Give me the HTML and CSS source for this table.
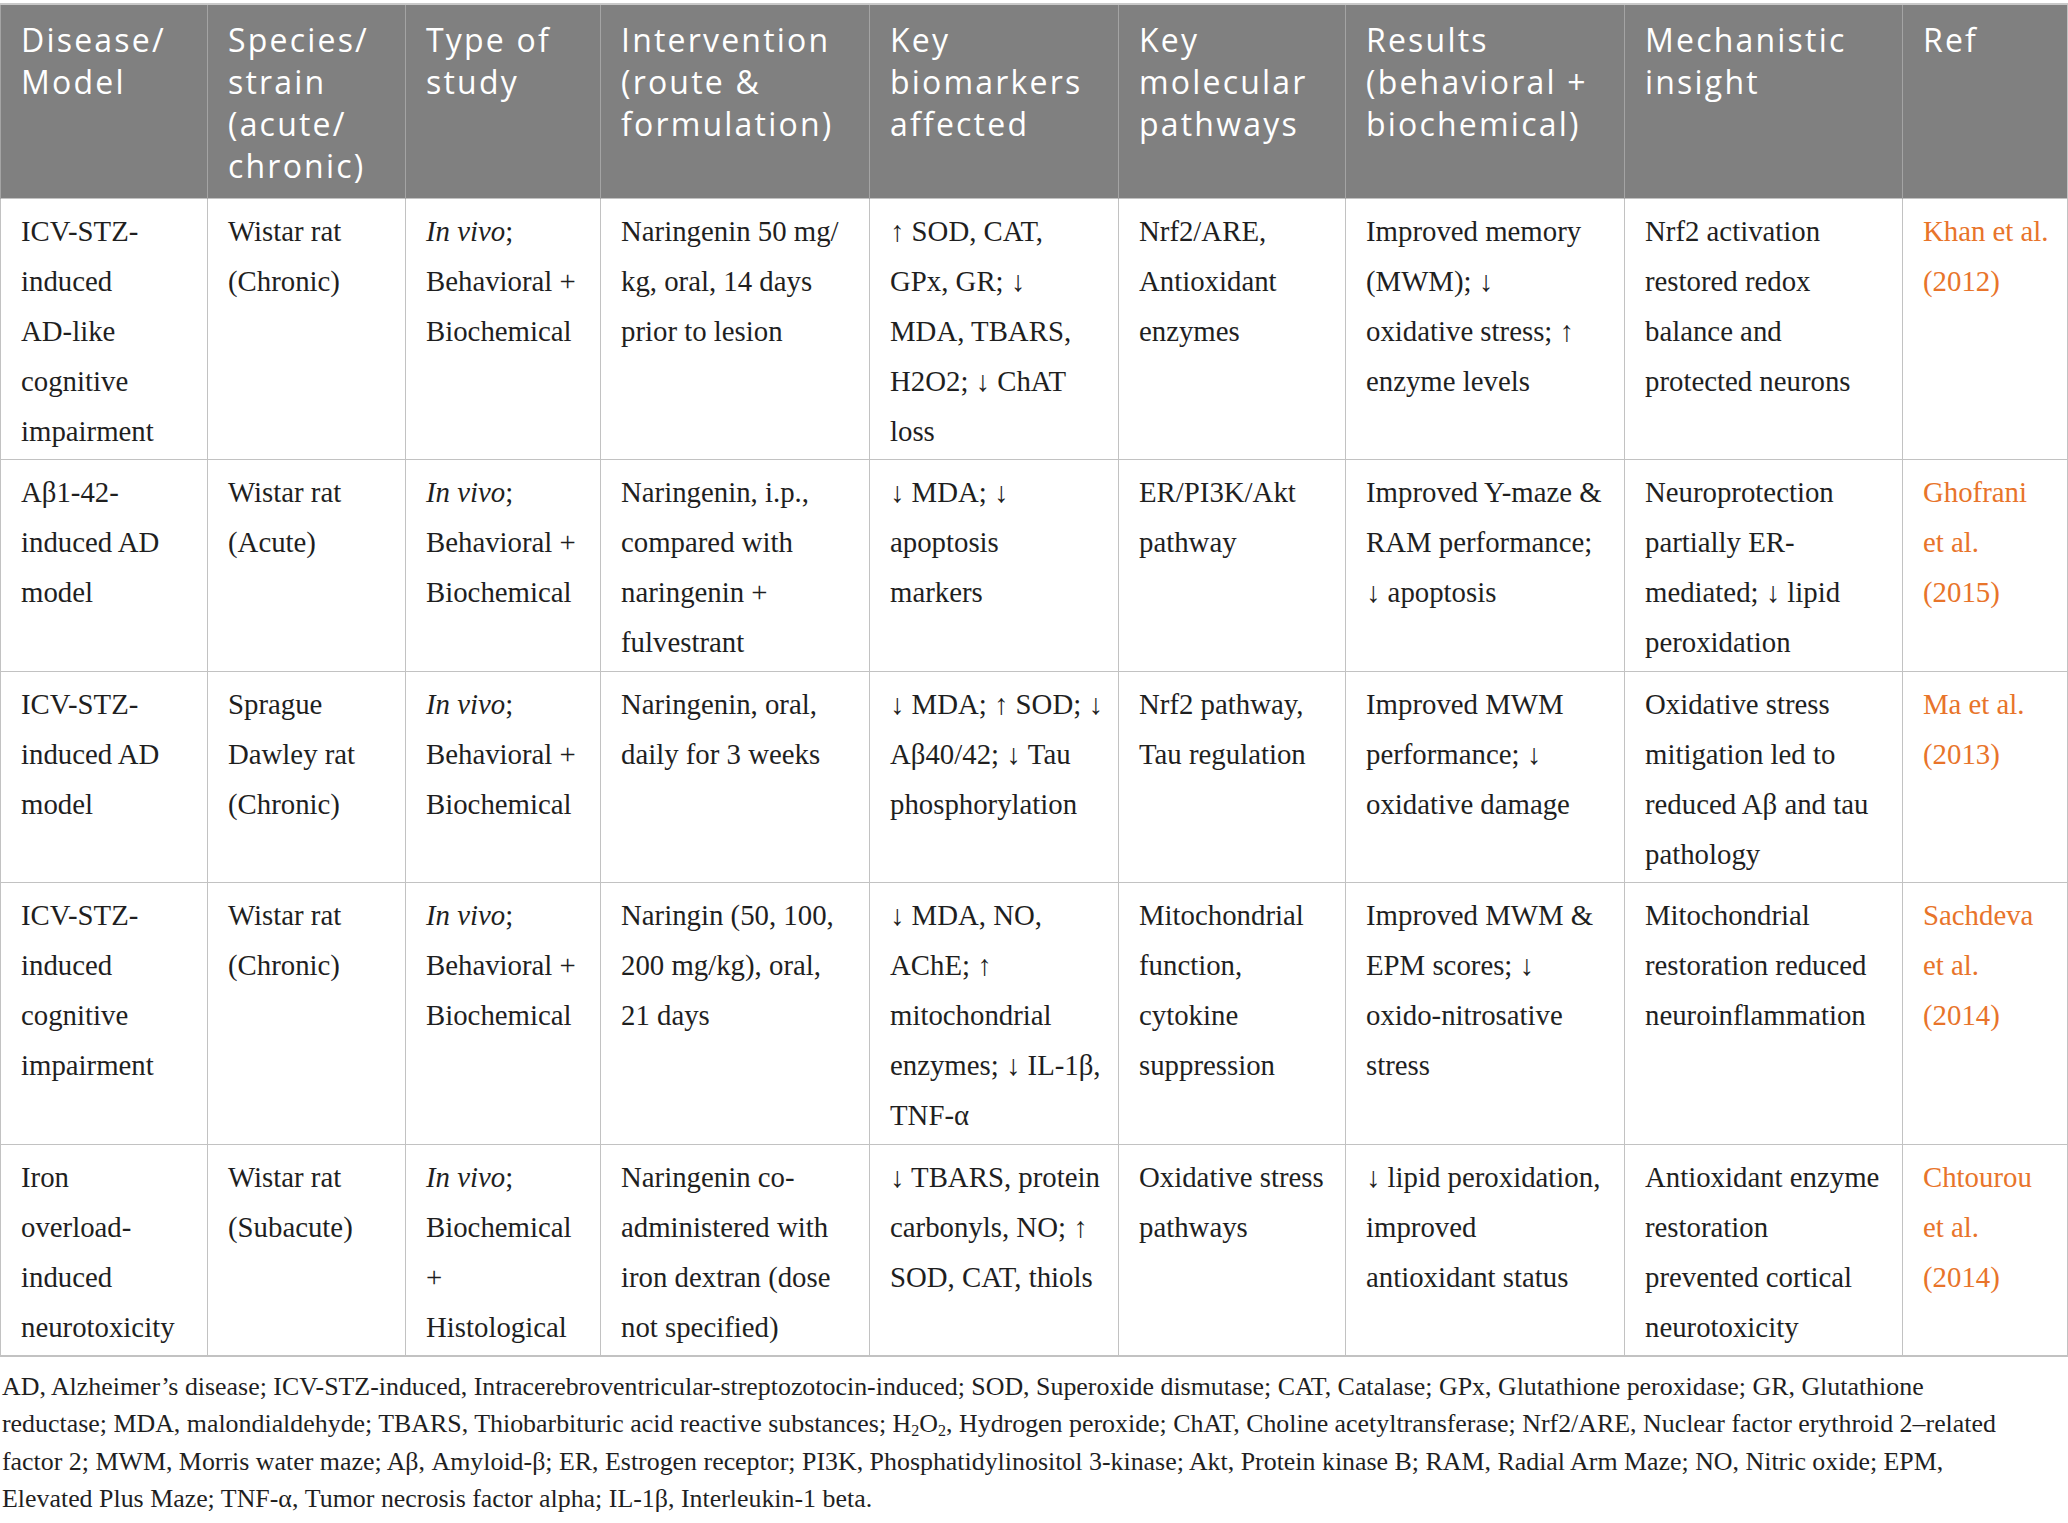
FILE: index.html
```html
<!DOCTYPE html>
<html lang="en">
<head>
<meta charset="utf-8">
<title>Naringenin studies</title>
<link rel="stylesheet" href="styles.css">
</head>
<body>
<div class="wrap">
<table class="tbl">
<colgroup>
<col class="w1"><col class="w2"><col class="w3"><col class="w4"><col class="w5"><col class="w6"><col class="w7"><col class="w8"><col class="w9">
</colgroup>
<thead>
<tr>
<th>Disease/<br>Model</th>
<th>Species/<br>strain<br>(acute/<br>chronic)</th>
<th>Type of<br>study</th>
<th>Intervention<br>(route &amp;<br>formulation)</th>
<th>Key<br>biomarkers<br>affected</th>
<th>Key<br>molecular<br>pathways</th>
<th>Results<br>(behavioral +<br>biochemical)</th>
<th>Mechanistic<br>insight</th>
<th>Ref</th>
</tr>
</thead>
<tbody>
<tr>
<td>ICV-STZ-<br>induced<br>AD-like<br>cognitive<br>impairment</td>
<td>Wistar rat<br>(Chronic)</td>
<td><i>In vivo</i>;<br>Behavioral +<br>Biochemical</td>
<td>Naringenin 50 mg/<br>kg, oral, 14 days<br>prior to lesion</td>
<td>↑ SOD, CAT,<br>GPx, GR; ↓<br>MDA, TBARS,<br>H2O2; ↓ ChAT<br>loss</td>
<td>Nrf2/ARE,<br>Antioxidant<br>enzymes</td>
<td>Improved memory<br>(MWM); ↓<br>oxidative stress; ↑<br>enzyme levels</td>
<td>Nrf2 activation<br>restored redox<br>balance and<br>protected neurons</td>
<td class="ref">Khan et al.<br>(2012)</td>
</tr>
<tr>
<td>Aβ1-42-<br>induced AD<br>model</td>
<td>Wistar rat<br>(Acute)</td>
<td><i>In vivo</i>;<br>Behavioral +<br>Biochemical</td>
<td>Naringenin, i.p.,<br>compared with<br>naringenin +<br>fulvestrant</td>
<td>↓ MDA; ↓<br>apoptosis<br>markers</td>
<td>ER/PI3K/Akt<br>pathway</td>
<td>Improved Y-maze &amp;<br>RAM performance;<br>↓ apoptosis</td>
<td>Neuroprotection<br>partially ER-<br>mediated; ↓ lipid<br>peroxidation</td>
<td class="ref">Ghofrani<br>et al.<br>(2015)</td>
</tr>
<tr>
<td>ICV-STZ-<br>induced AD<br>model</td>
<td>Sprague<br>Dawley rat<br>(Chronic)</td>
<td><i>In vivo</i>;<br>Behavioral +<br>Biochemical</td>
<td>Naringenin, oral,<br>daily for 3 weeks</td>
<td>↓ MDA; ↑ SOD; ↓<br>Aβ40/42; ↓ Tau<br>phosphorylation</td>
<td>Nrf2 pathway,<br>Tau regulation</td>
<td>Improved MWM<br>performance; ↓<br>oxidative damage</td>
<td>Oxidative stress<br>mitigation led to<br>reduced Aβ and tau<br>pathology</td>
<td class="ref">Ma et al.<br>(2013)</td>
</tr>
<tr>
<td>ICV-STZ-<br>induced<br>cognitive<br>impairment</td>
<td>Wistar rat<br>(Chronic)</td>
<td><i>In vivo</i>;<br>Behavioral +<br>Biochemical</td>
<td>Naringin (50, 100,<br>200 mg/kg), oral,<br>21 days</td>
<td>↓ MDA, NO,<br>AChE; ↑<br>mitochondrial<br>enzymes; ↓ IL-1β,<br>TNF-α</td>
<td>Mitochondrial<br>function,<br>cytokine<br>suppression</td>
<td>Improved MWM &amp;<br>EPM scores; ↓<br>oxido-nitrosative<br>stress</td>
<td>Mitochondrial<br>restoration reduced<br>neuroinflammation</td>
<td class="ref">Sachdeva<br>et al.<br>(2014)</td>
</tr>
<tr>
<td>Iron<br>overload-<br>induced<br>neurotoxicity</td>
<td>Wistar rat<br>(Subacute)</td>
<td><i>In vivo</i>;<br>Biochemical<br>+<br>Histological</td>
<td>Naringenin co-<br>administered with<br>iron dextran (dose<br>not specified)</td>
<td>↓ TBARS, protein<br>carbonyls, NO; ↑<br>SOD, CAT, thiols</td>
<td>Oxidative stress<br>pathways</td>
<td>↓ lipid peroxidation,<br>improved<br>antioxidant status</td>
<td>Antioxidant enzyme<br>restoration<br>prevented cortical<br>neurotoxicity</td>
<td class="ref">Chtourou<br>et al.<br>(2014)</td>
</tr>
</tbody>
</table>
<p class="notes">AD, Alzheimer’s disease; ICV-STZ-induced, Intracerebroventricular-streptozotocin-induced; SOD, Superoxide dismutase; CAT, Catalase; GPx, Glutathione peroxidase; GR, Glutathione<br>reductase; MDA, malondialdehyde; TBARS, Thiobarbituric acid reactive substances; H<sub>2</sub>O<sub>2</sub>, Hydrogen peroxide; ChAT, Choline acetyltransferase; Nrf2/ARE, Nuclear factor erythroid 2–related<br>factor 2; MWM, Morris water maze; Aβ, Amyloid-β; ER, Estrogen receptor; PI3K, Phosphatidylinositol 3-kinase; Akt, Protein kinase B; RAM, Radial Arm Maze; NO, Nitric oxide; EPM,<br>Elevated Plus Maze; TNF-α, Tumor necrosis factor alpha; IL-1β, Interleukin-1 beta.</p>
</div>
</body>
</html>
```
FILE: styles.css
```css
html, body {
  margin: 0;
  padding: 0;
  background: #ffffff;
}

.wrap {
  width: 2068px;
  padding-top: 3px;
}

.tbl {
  width: 2067px;
  table-layout: fixed;
  border-collapse: collapse;
  border-top: 2px solid #c9c9c9;
  border-left: 1px solid #c2c2c2;
  border-right: 1px solid #c2c2c2;
  border-bottom: 2px solid #c2c2c2;
}

.w1 { width: 207px; }
.w2 { width: 198px; }
.w3 { width: 195px; }
.w4 { width: 269px; }
.w5 { width: 249px; }
.w6 { width: 227px; }
.w7 { width: 279px; }
.w8 { width: 278px; }
.w9 { width: 165px; }

.tbl th {
  background: #808080;
  color: #ffffff;
  font-family: "Open Sans", "Noto Sans", sans-serif;
  font-weight: 400;
  font-size: 32px;
  letter-spacing: 2.2px;
  line-height: 42px;
  text-align: left;
  vertical-align: top;
  padding: 14px 6px 11px 20px;
  border-left: 1px solid #a4a4a4;
  white-space: nowrap;
}

.tbl td {
  font-family: "Liberation Serif", "Times New Roman", serif;
  font-size: 28.8px;
  line-height: 50px;
  color: #1f1f1f;
  vertical-align: top;
  text-align: left;
  padding: 7px 6px 3.4px 20px;
  border: 1px solid #c2c2c2;
  white-space: nowrap;
}

.tbl td.ref {
  color: #e8742a;
}

.notes {
  margin: 11px 0 0 0;
  padding-left: 2px;
  font-family: "Liberation Serif", "Times New Roman", serif;
  font-size: 25.9px;
  line-height: 37.3px;
  color: #1f1f1f;
  white-space: nowrap;
}

.notes sub {
  font-size: 0.62em;
  line-height: 0;
  vertical-align: -0.25em;
}
```
